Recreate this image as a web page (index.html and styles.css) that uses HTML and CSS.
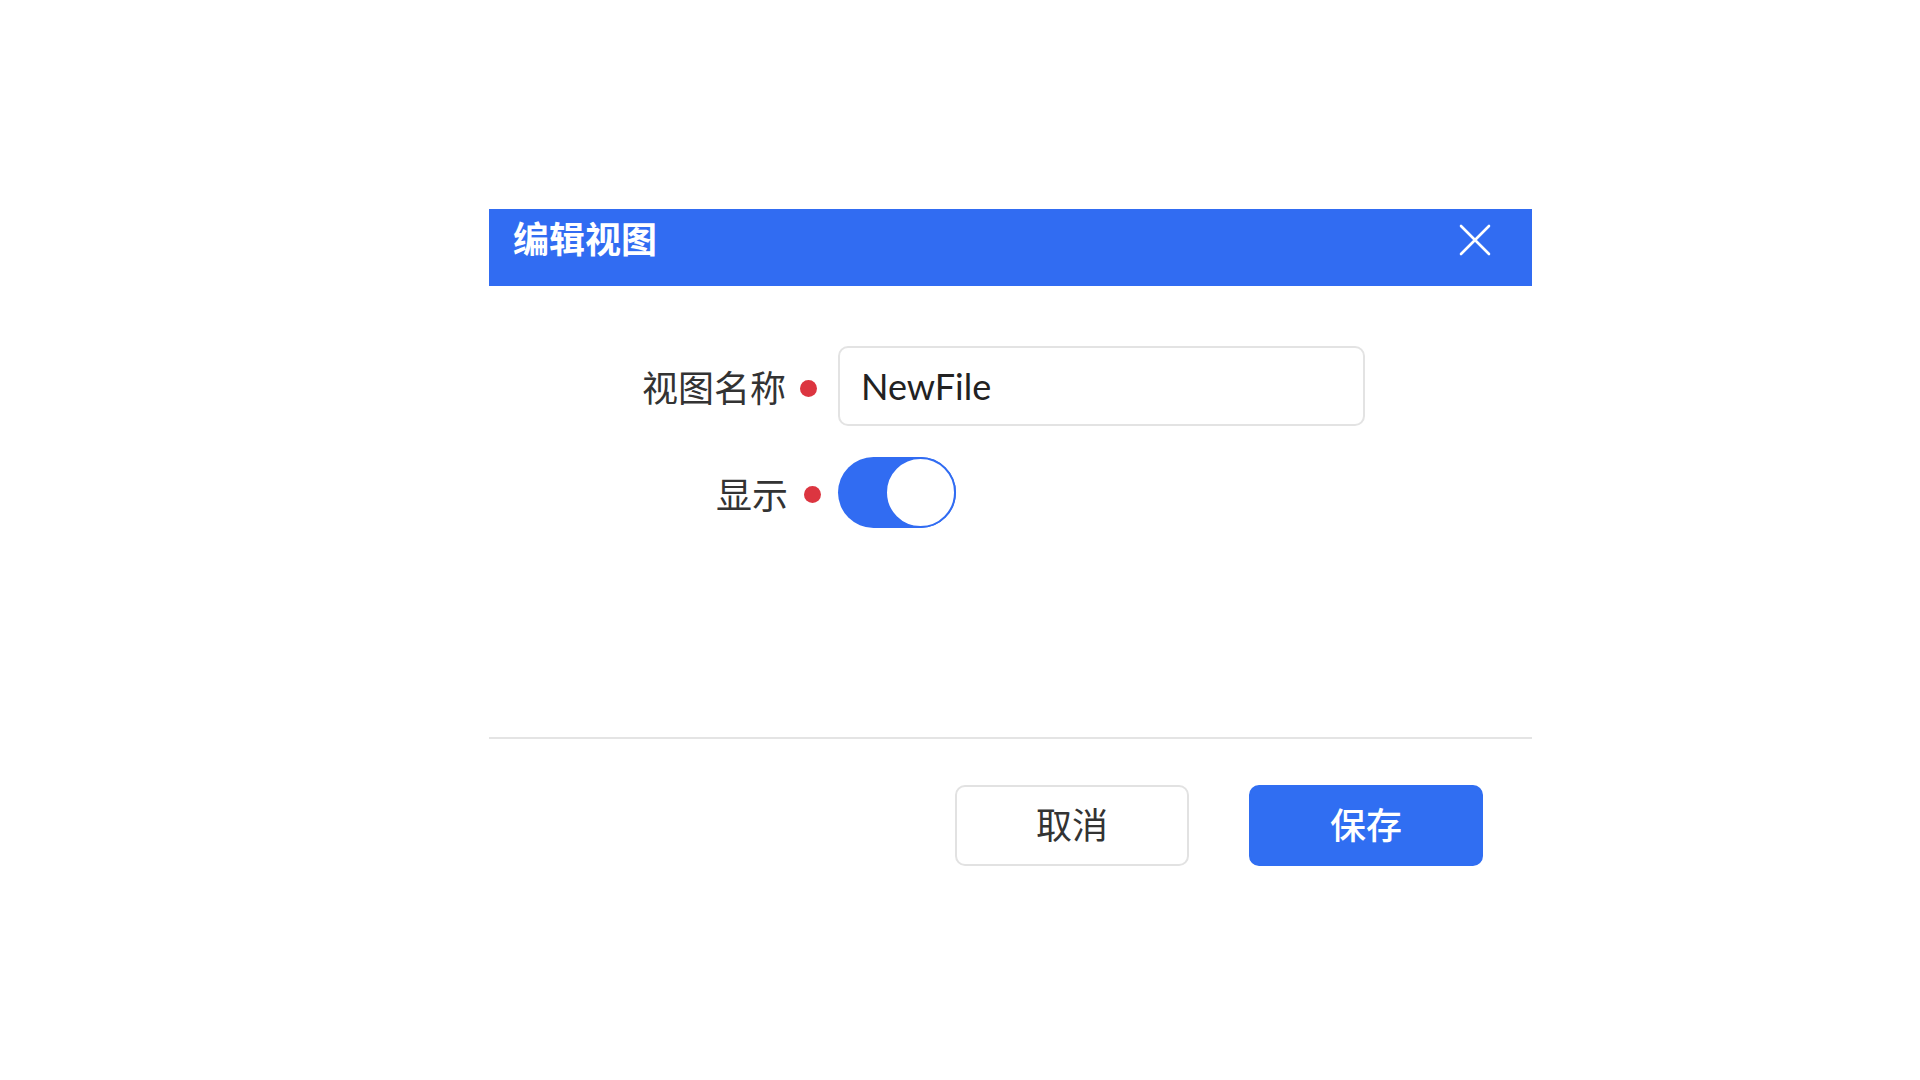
FILE: index.html
```html
<!DOCTYPE html>
<html lang="zh-CN">
<head>
<meta charset="utf-8">
<title>编辑视图</title>
<link rel="stylesheet" href="styles.css">
</head>
<body>
<div class="dialog">
  <div class="dialog-header">
    <span class="dialog-title">编辑视图</span>
    <svg class="close-icon" width="32" height="32" viewBox="0 0 32 32" aria-label="关闭">
      <path d="M2 2 L30 30 M30 2 L2 30" stroke="#ffffff" stroke-width="2.6" stroke-linecap="round" fill="none"/>
    </svg>
  </div>
  <div class="dialog-body">
    <div class="form">
      <div class="form-label"><span>视图名称</span><i class="required-dot"></i></div>
      <div class="form-control"><input class="text-input" type="text" value="NewFile"></div>
      <div class="form-label label-short"><span>显示</span><i class="required-dot"></i></div>
      <div class="form-control"><div class="switch"><div class="switch-knob"></div></div></div>
    </div>
  </div>
  <div class="dialog-footer">
    <button class="btn btn-default">取消</button>
    <button class="btn btn-primary">保存</button>
  </div>
</div>
</body>
</html>
```

FILE: styles.css
```css
html, body {
  margin: 0;
  padding: 0;
  background: #ffffff;
}

body {
  width: 1920px;
  height: 1080px;
  overflow: hidden;
  font-family: "Lato", "Noto Sans CJK SC", sans-serif;
  color: #333333;
}

.dialog {
  margin: 209px 0 0 489px;
  width: 1043px;
  background: #ffffff;
}

.dialog-header {
  height: 77px;
  box-sizing: border-box;
  background: #316cf2;
  display: flex;
  justify-content: space-between;
  align-items: flex-start;
  padding: 10px 41px 0 24px;
}

.dialog-title {
  font-family: "Noto Sans CJK SC", sans-serif;
  font-size: 36px;
  line-height: 36px;
  font-weight: 700;
  color: #ffffff;
}

.close-icon {
  display: block;
  margin-top: 5px;
}

.dialog-body {
  height: 451px;
  box-sizing: border-box;
  padding-top: 60px;
}

.form {
  display: grid;
  grid-template-columns: 328px 527px;
  column-gap: 21px;
  row-gap: 31px;
  align-items: center;
}

.form-label {
  display: flex;
  justify-content: flex-end;
  align-items: center;
  font-family: "Noto Sans CJK SC", sans-serif;
  font-size: 36px;
  line-height: 40px;
  color: #333333;
}

.label-short {
  padding-right: 0;
}

.label-short .required-dot {
  margin-left: 16px;
  margin-right: -4px;
}

.required-dot {
  display: block;
  width: 17px;
  height: 17px;
  border-radius: 50%;
  background: #dc3540;
  margin-left: 14px;
  margin-top: 4px;
}

.form-control {
  display: flex;
  align-items: center;
}

.text-input {
  width: 527px;
  height: 80px;
  box-sizing: border-box;
  border: 2px solid #e3e3e3;
  border-radius: 10px;
  padding: 0 0 0 21px;
  font-family: "Lato", "Noto Sans CJK SC", sans-serif;
  font-size: 36px;
  color: #222222;
  background: #ffffff;
  outline: none;
}

.switch {
  width: 118px;
  height: 71px;
  border-radius: 36px;
  background: #316cf2;
  display: flex;
  justify-content: flex-end;
}

.switch-knob {
  width: 71px;
  height: 71px;
  box-sizing: border-box;
  border-radius: 50%;
  background: #ffffff;
  border: 2px solid #316cf2;
}

.dialog-footer {
  border-top: 2px solid #e4e4e4;
  display: flex;
  justify-content: flex-end;
  gap: 60px;
  padding: 46px 49px 42px 0;
}

.btn {
  width: 234px;
  height: 81px;
  box-sizing: border-box;
  border-radius: 10px;
  font-family: "Noto Sans CJK SC", sans-serif;
  font-size: 36px;
  line-height: 1;
  cursor: pointer;
  padding: 0 0 5px 0;
}

.btn-default {
  background: #ffffff;
  border: 2px solid #e2e2e2;
  color: #333333;
}

.btn-primary {
  background: #306ef2;
  border: 2px solid #306ef2;
  color: #ffffff;
  font-weight: 500;
}
```
